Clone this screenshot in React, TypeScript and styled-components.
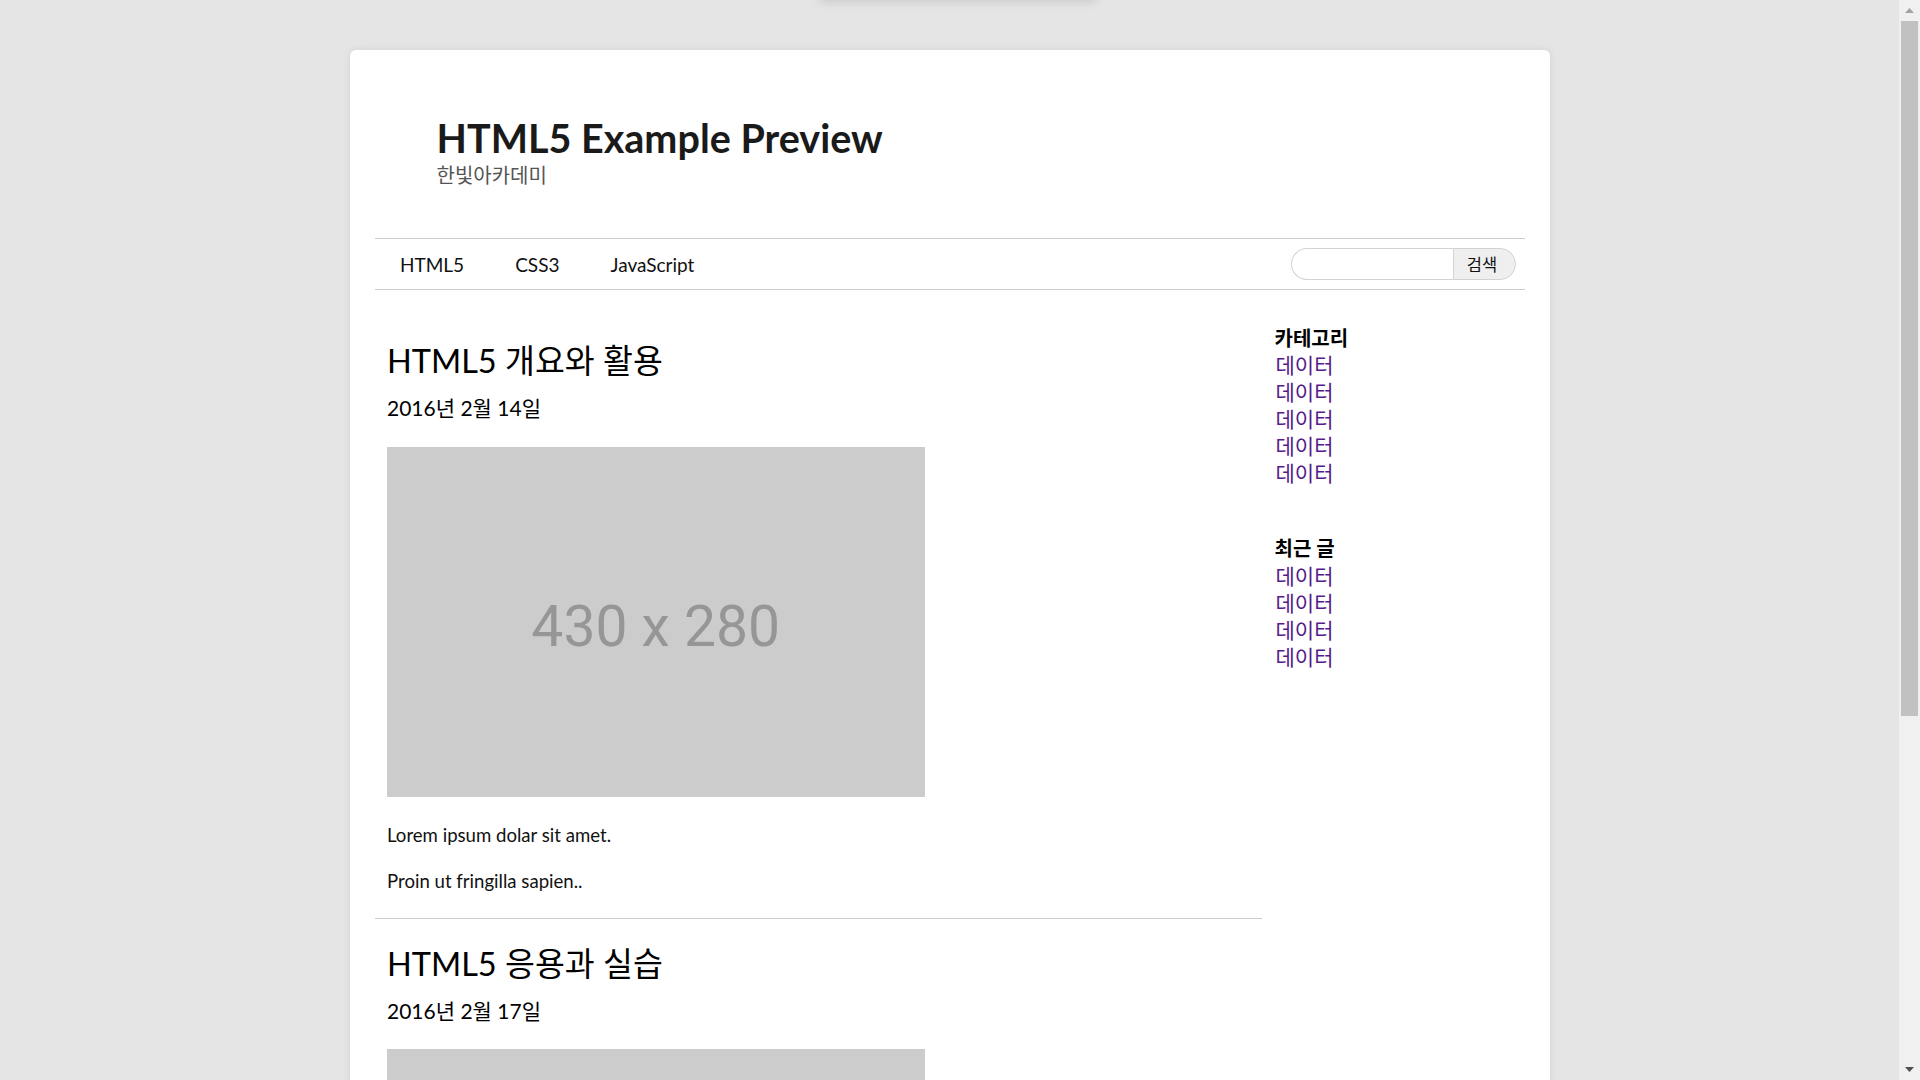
import React from "react";
import styled, { createGlobalStyle } from "styled-components";

const GlobalStyle = createGlobalStyle`
  html {
    background: #e5e5e5;
  }
  body {
    margin: 0;
    font-family: Lato, "Noto Sans CJK KR", sans-serif;
    color: #111;
  }
`;

const Page = styled.div`
  padding: 50px 21px 50px 0;
`;

// shadow of a tab hanging just above the viewport
const TopTab = styled.div`
  position: fixed;
  top: -30px;
  left: 50%;
  margin-left: -140px;
  width: 276px;
  height: 30px;
  background: #e5e5e5;
  box-shadow: 0 2px 10px rgba(0, 0, 0, 0.12);
`;

const ScrollTrack = styled.div`
  position: fixed;
  top: 0;
  right: 0;
  width: 21px;
  height: 100vh;
  background: #f0f0f0;
`;

const ScrollArrow = styled.div<{ down?: boolean }>`
  position: absolute;
  left: 0;
  ${(p) => (p.down ? "bottom: 0;" : "top: 0;")}
  width: 21px;
  height: 21px;
  display: flex;
  align-items: center;
  justify-content: center;
`;

const ScrollThumb = styled.div`
  position: absolute;
  top: 21px;
  left: 2px;
  width: 17px;
  height: 695px;
  background: #c1c1c1;
`;

const Card = styled.div`
  width: 1200px;
  margin: 0 auto;
  box-sizing: border-box;
  padding: 0 25px 50px;
  background: #fff;
  border-radius: 6px;
  box-shadow: 0 0 8px rgba(0, 0, 0, 0.08);
`;

const Header = styled.header`
  padding: 64px 0 50px 62px;
`;

const SiteTitle = styled.h1`
  margin: 0;
  font-size: 39.5px;
  line-height: 48px;
  font-weight: 700;
  color: #1a1a1a;
`;

const SiteSub = styled.p`
  margin: 0;
  font-size: 20px;
  line-height: 26px;
  color: #555;
`;

const Nav = styled.nav`
  display: flex;
  align-items: center;
  justify-content: space-between;
  height: 50px;
  padding-right: 9px;
  border-top: 1px solid #ccc;
  border-bottom: 1px solid #ccc;
`;

const NavList = styled.ul`
  display: flex;
  margin: 0;
  padding: 0;
  list-style: none;
`;

const NavItem = styled.li`
  padding: 2px 25.5px 0;
  font-size: 19px;
  line-height: 48px;
  color: #111;
`;

const SearchForm = styled.form`
  display: flex;
  height: 32px;
`;

const SearchInput = styled.input`
  box-sizing: border-box;
  width: 162px;
  height: 32px;
  border: 1px solid #d2d2d2;
  border-right: none;
  border-radius: 16px 0 0 16px;
  background: #fff;
  outline: none;
`;

const SearchButton = styled.button`
  box-sizing: border-box;
  width: 63px;
  height: 32px;
  padding: 0 4px 0 0;
  border: 1px solid #d2d2d2;
  border-radius: 0 16px 16px 0;
  background: #efefef;
  font-family: "Noto Sans CJK KR", sans-serif;
  font-size: 16.5px;
  color: #111;
`;

const Body = styled.div`
  display: flex;
  align-items: flex-start;
`;

const Main = styled.main`
  width: 887px;
  padding-top: 26px;
`;

const Article = styled.article<{ last?: boolean }>`
  padding: 25px 12.5px;
  border-bottom: ${(p) => (p.last ? "none" : "1px solid #ccc")};
`;

const PostTitle = styled.h2`
  margin: 0;
  font-size: 32.5px;
  line-height: 40px;
  font-weight: 400;
  color: #000;
`;

const PostDate = styled.p`
  margin: 12px 0 0;
  font-size: 21px;
  line-height: 30px;
  color: #000;
`;

const Placeholder = styled.div`
  display: flex;
  align-items: center;
  justify-content: center;
  box-sizing: border-box;
  width: 537.5px;
  height: 350px;
  margin-top: 23.5px;
  padding-top: 10px;
  background: #cccccc;
  font-family: Roboto, "Liberation Sans", sans-serif;
  font-size: 57px;
  color: #969696;
`;

const Para = styled.p<{ gap: number }>`
  margin: ${(p) => p.gap}px 0 0;
  font-size: 18.6px;
  line-height: 24px;
  color: #111;
`;

const Aside = styled.aside`
  flex: 1;
  padding: 35.5px 0 0 13px;
`;

const Section = styled.section`
  margin-bottom: 50px;
`;

const SideHeading = styled.h3`
  margin: 0;
  font-size: 20px;
  line-height: 25.5px;
  font-weight: 700;
  color: #000;
`;

const SideLink = styled.a`
  display: block;
  padding-left: 1px;
  font-size: 21px;
  line-height: 27px;
  color: #551a8b;
  text-decoration: none;
`;

const posts = [
  { title: "HTML5 개요와 활용", date: "2016년 2월 14일" },
  { title: "HTML5 응용과 실습", date: "2016년 2월 17일" },
];

const sidebar = [
  { title: "카테고리", count: 5 },
  { title: "최근 글", count: 4 },
];

function Triangle({ down, color }: { down?: boolean; color: string }) {
  return (
    <svg width="9" height="5" viewBox="0 0 9 5">
      <path d={down ? "M0 0H9L4.5 5Z" : "M0 5H9L4.5 0Z"} fill={color} />
    </svg>
  );
}

export default function App() {
  return (
    <>
      <GlobalStyle />
      <TopTab />
      <Page>
        <Card>
          <Header>
            <SiteTitle>HTML5 Example Preview</SiteTitle>
            <SiteSub>한빛아카데미</SiteSub>
          </Header>
          <Nav>
            <NavList>
              <NavItem>HTML5</NavItem>
              <NavItem>CSS3</NavItem>
              <NavItem>JavaScript</NavItem>
            </NavList>
            <SearchForm onSubmit={(e) => e.preventDefault()}>
              <SearchInput type="text" />
              <SearchButton type="submit">검색</SearchButton>
            </SearchForm>
          </Nav>
          <Body>
            <Main>
              {posts.map((post, i) => (
                <Article key={post.title} last={i === posts.length - 1}>
                  <PostTitle>{post.title}</PostTitle>
                  <PostDate>{post.date}</PostDate>
                  <Placeholder>430 x 280</Placeholder>
                  <Para gap={26}>Lorem ipsum dolar sit amet.</Para>
                  <Para gap={22}>Proin ut fringilla sapien..</Para>
                </Article>
              ))}
            </Main>
            <Aside>
              {sidebar.map((s) => (
                <Section key={s.title}>
                  <SideHeading>{s.title}</SideHeading>
                  {Array.from({ length: s.count }).map((_, j) => (
                    <SideLink key={j} href="#">
                      데이터
                    </SideLink>
                  ))}
                </Section>
              ))}
            </Aside>
          </Body>
        </Card>
      </Page>
      <ScrollTrack>
        <ScrollArrow>
          <Triangle color="#a3a3a3" />
        </ScrollArrow>
        <ScrollThumb />
        <ScrollArrow down>
          <Triangle down color="#505050" />
        </ScrollArrow>
      </ScrollTrack>
    </>
  );
}
